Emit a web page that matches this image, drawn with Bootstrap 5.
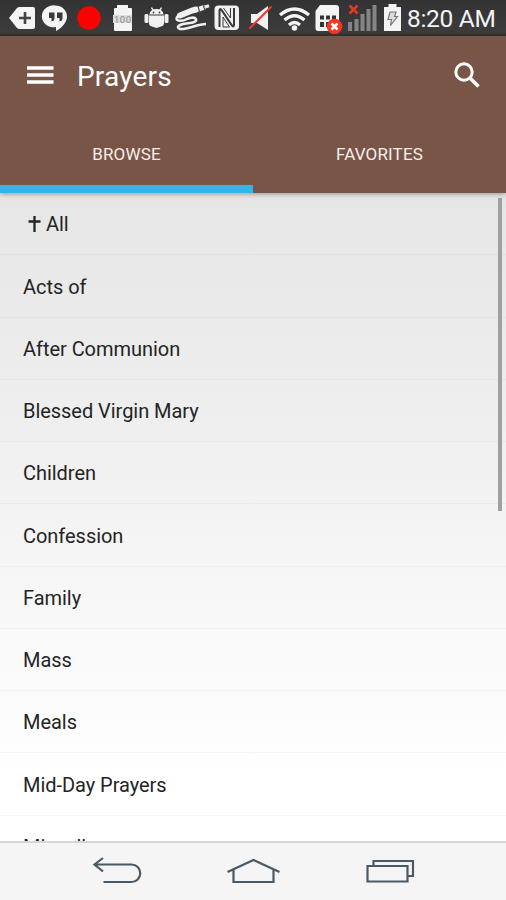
<!DOCTYPE html>
<html lang="en">
<head>
<meta charset="utf-8">
<meta name="viewport" content="width=device-width, initial-scale=1">
<title>Prayers</title>
<link href="https://cdn.jsdelivr.net/npm/bootstrap@5.3.0/dist/css/bootstrap.min.css" rel="stylesheet">
<style>
  body { font-family: Roboto, "Liberation Sans", sans-serif; }
  .screen { height: 900px; overflow: hidden; }
  .status-bar { height: 36px; background: linear-gradient(#333, #3c3c3c 90%, #303030); color: #f4f4f4; }
  .status-bar svg { display: block; flex: none; }
  .clock { font-size: 24.5px; line-height: 36px; padding-left: 1px; padding-top: 1px; letter-spacing: -.3px; white-space: nowrap; }
  .app-header { height: 157px; background: #795548; color: #fff; flex: none; z-index: 2; box-shadow: 0 1px 5px rgba(0,0,0,.35); }
  .toolbar { height: 80px; padding: 0 25px 0 26px; }
  .app-title { font-size: 28px; font-weight: 400; line-height: 36px; margin-left: 23px; margin-top: 1px; letter-spacing: .2px; }
  .tabs { height: 77px; }
  .tabs .nav-link { color: #f7eeea; font-size: 17px; letter-spacing: .15px; line-height: 77px; padding: 0; border-radius: 0; border-bottom: 8px solid transparent; height: 77px; }
  .tabs .nav-link.active { border-bottom-color: #33b5e5; }
  .tabs .nav-link:hover, .tabs .nav-link:focus { color: #fff; }
  .prayer-list { background: linear-gradient(#e6e6e6, #eeeeee 33%, #f6f6f6 58%, #fff 90%); }
  .prayer-list .list-group-item { height: 62.25px; padding: 1.5px 23px 0; background: transparent; color: #242424; border-color: rgba(0,0,0,.03); font-size: 20px; letter-spacing: -.04px; flex: none; }
  .scroll-thumb { top: 5px; right: 4px; width: 4px; height: 313px; background: #a0a0a0; }
  .nav-keys { height: 59px; flex: none; background: #f5f5f5; border-top: 2px solid #d5d5d5; z-index: 2; padding-top: 1px; }
  .nav-keys svg { display: block; }
</style>
<script src="https://cdn.jsdelivr.net/npm/bootstrap@5.3.0/dist/js/bootstrap.bundle.min.js"></script>
</head>
<body>
<div class="screen d-flex flex-column">
  <div class="status-bar d-flex flex-shrink-0">
    <svg width="40" height="36" viewBox="0 0 40 36"><path d="M9 18 17 8Q18 7 20 7H33Q35 7 35 9V27Q35 29 33 29H20Q18 29 17 28Z" fill="#f4f4f4"/><path d="M19 18H31M25 12V24" stroke="#444" stroke-width="2.6"/></svg>
    <svg width="32" height="36" viewBox="40 0 32 36"><path d="M55.5 5.5A11.5 11 0 1 0 56 27V31C62 28 67 22 67 16.500A11.500 11 0 0 0 55.500 5.500Z" fill="#f4f4f4"/><path d="M49 12.500H54.500V18Q54.500 21 51.500 21.500V18H49ZM57 12.500H62.500V18Q62.500 21 59.500 21.500V18H57Z" fill="#3a3a3a"/></svg>
    <svg width="34" height="36" viewBox="72 0 34 36"><circle cx="89" cy="18" r="11.700" fill="#f00"/></svg>
    <svg width="34" height="36" viewBox="106 0 34 36"><path d="M117 5H128V8H131Q132 8 132 9V30Q132 31 131 31H115Q114 31 114 30V9Q114 8 115 8H117Z" fill="#f4f4f4"/><rect x="113" y="15" width="19" height="8" fill="#ddd"/><text x="122.500" y="22.500" text-anchor="middle" font-family="Roboto, sans-serif" font-size="9.500" textLength="17" fill="#888">100</text></svg>
    <svg width="32" height="36" viewBox="140 0 32 36" fill="#f0f0f0"><path d="M149.500 14.500Q150 9 156.500 9T163.500 14.500ZM149 15.500H164V23Q164 26 161 26.500L156.500 28 152 26.500Q149 26 149 23Z"/><rect x="144.500" y="14" width="4" height="9" rx="1.500"/><rect x="164.500" y="14" width="4" height="9" rx="1.500"/><path d="M151.500 7.500 153.500 11M161.500 7.500 159.500 11" stroke="#f0f0f0" stroke-width="1.500"/><circle cx="153.500" cy="12.500" r=".9" fill="#444"/><circle cx="159.500" cy="12.500" r=".9" fill="#444"/><path d="M149 15H164" stroke="#999"/></svg>
    <svg width="40" height="36" viewBox="172 0 40 36" fill="none" stroke="#f0f0f0"><path d="M180 15.500 192 10.500 196 9.500" stroke-width="6" stroke-linecap="round"/><path d="M198 9.500 205 7" stroke-width="5"/><path d="M205 7 209 5.800" stroke-width="3"/><path d="M178 16C173 21 181 22 187 19 197 15 200 22 190 23 179 24 175 27 180 29 187 30 197 24 206 24" stroke-width="2.500"/><path d="M198 6 200 13M203 5 205 10" stroke="#555" stroke-width="1.200"/></svg>
    <svg width="32" height="36" viewBox="212 0 32 36"><rect x="214.500" y="5.500" width="24.500" height="24.500" rx="4" fill="#f2f2f2"/><path d="M219.500 27V10.500Q219.500 8 221.500 10L232 25.500Q234 27.500 234 25V8" fill="none" stroke="#3a3a3a" stroke-width="2"/><path d="M223.500 8 230.500 18V8M223 17V27H229.500Z" fill="#f2f2f2" stroke="#3a3a3a" stroke-width="1"/></svg>
    <svg width="33" height="36" viewBox="244 0 33 36"><path d="M251 14H257L268 6V30L257 23H251Z" fill="#f2f2f2"/><path d="M249.500 28.500 271.500 6.500" stroke="#ee3a2b" stroke-width="2"/></svg>
    <svg width="35" height="36" viewBox="277 0 35 36" fill="none" stroke="#f4f4f4" stroke-width="3.200"><path d="M280 15Q294.500 3 309 15M284.500 20Q294.500 11.500 304.500 20M289 25Q294.500 20 300 25"/><circle cx="294.500" cy="28" r="2.800" fill="#f4f4f4" stroke="none"/></svg>
    <svg width="33" height="36" viewBox="312 0 33 36"><path d="M320 5H336Q339 5 339 8V31H318Q315.500 31 315.500 28V11Z" fill="#f4f4f4"/><path d="M320 15.500h4v4h-4zM326 15.500h4v4h-4zM332 15.500h4v4h-4zM320 22h4v5h-4zM326 22h4v5h-4z" fill="#333"/><circle cx="334.500" cy="26.500" r="7.800" fill="#f2381f"/><path d="M331.500 23.500 337.500 29.500M337.500 23.500 331.500 29.500" stroke="#fff" stroke-width="2.600"/></svg>
    <svg width="35" height="36" viewBox="345 0 35 36"><path d="M348 22h4v9h-4zM354.500 19h4v12h-4zM360.500 14h4v17h-4zM366.500 9h4v22h-4zM372.500 5h4v26h-4z" fill="#858585"/><path d="M349.500 5.500 357.500 13.500M357.500 5.500 349.500 13.500" stroke="#e63822" stroke-width="2.500"/></svg>
    <svg width="26" height="36" viewBox="380 0 26 36"><path d="M388.500 4H396.500V7H401V31H384V7H388.500Z" fill="#f4f4f4"/><path d="M390 12H396L394.500 16.500H397.500L390.500 25.500 391.500 19.500H388Z" fill="#ddd" stroke="#777" stroke-width="1.200"/></svg>
    <div class="clock">8:20 AM</div>
  </div>

  <header class="app-header position-relative">
    <div class="toolbar d-flex align-items-center">
      <svg width="28" height="28" viewBox="0 0 28 28" stroke="#fff" stroke-width="3.600"><path d="M1 6H27.500M1 13H27.500M1 20H27.500"/></svg>
      <h1 class="app-title mb-0">Prayers</h1>
      <svg class="ms-auto" width="28" height="28" viewBox="0 0 28 28" fill="none" stroke="#fff"><circle cx="11" cy="10" r="8.200" stroke-width="3"/><path d="M17 16 25.500 24.500" stroke-width="3.600"/></svg>
    </div>
    <nav class="tabs nav nav-justified">
      <a class="nav-link active" href="#">BROWSE</a>
      <a class="nav-link" href="#">FAVORITES</a>
    </nav>
  </header>

  <main class="prayer-list flex-grow-1 overflow-hidden position-relative">
    <div class="list-group list-group-flush">
      <div class="list-group-item d-flex align-items-center"><svg class="ms-1 me-1" width="15" height="20" viewBox="0 0 15 20" fill="none" stroke="#242424"><path d="M7.500 2V18M1.500 7.500H13.500" stroke-width="2.300"/></svg><span class="all-label">All</span></div>
      <div class="list-group-item d-flex align-items-center">Acts of</div>
      <div class="list-group-item d-flex align-items-center">After Communion</div>
      <div class="list-group-item d-flex align-items-center">Blessed Virgin Mary</div>
      <div class="list-group-item d-flex align-items-center">Children</div>
      <div class="list-group-item d-flex align-items-center">Confession</div>
      <div class="list-group-item d-flex align-items-center">Family</div>
      <div class="list-group-item d-flex align-items-center">Mass</div>
      <div class="list-group-item d-flex align-items-center">Meals</div>
      <div class="list-group-item d-flex align-items-center">Mid-Day Prayers</div>
      <div class="list-group-item d-flex align-items-center">Miscellaneous</div>
    </div>
    <div class="scroll-thumb position-absolute"></div>
  </main>

  <footer class="nav-keys d-flex">
    <svg width="180" height="56" viewBox="0 844 180 56" fill="none" stroke="#4a5a64" stroke-width="2.200"><path d="M103.500 882H131.500A8.750 8.750 0 0 0 131.500 864.500H95M103 858 94.500 864.500 103 871.500"/></svg>
    <svg width="160" height="56" viewBox="180 844 160 56" fill="none" stroke="#4a5a64" stroke-width="2.200"><path d="M227.500 872 253.500 860 279.500 872M233.500 870V882H273.500V870"/></svg>
    <svg width="166" height="56" viewBox="340 844 166 56" fill="none" stroke="#4a5a64" stroke-width="2.200"><path d="M367.500 866H407.500V881.500H367.500ZM373.500 866V861H413V876H408"/></svg>
  </footer>
</div>
</body>
</html>
